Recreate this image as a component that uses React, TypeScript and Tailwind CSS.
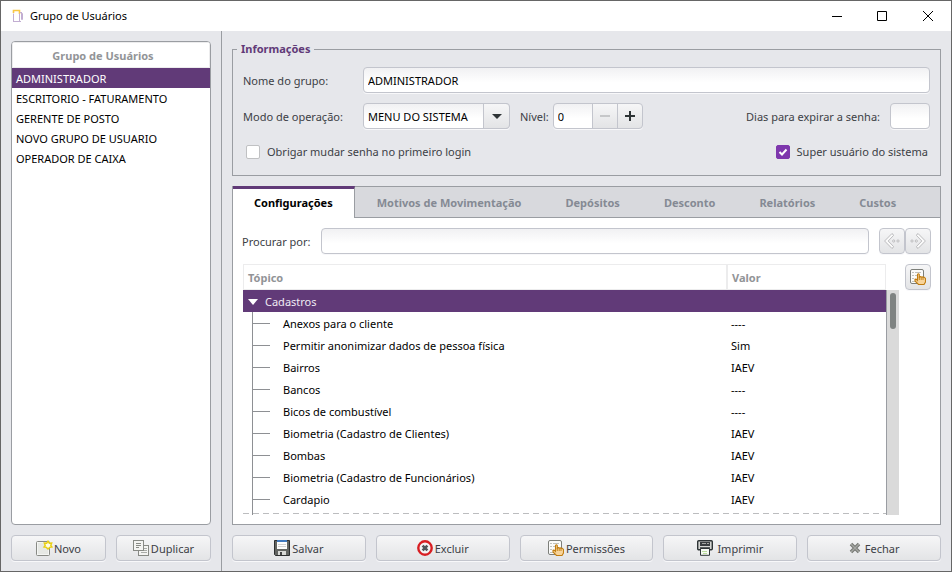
import { useState, type ReactNode } from 'react'

const groups = [
  'ADMINISTRADOR',
  'ESCRITORIO - FATURAMENTO',
  'GERENTE DE POSTO',
  'NOVO GRUPO DE USUARIO',
  'OPERADOR DE CAIXA',
]

const tabs = ['Configurações', 'Motivos de Movimentação', 'Depósitos', 'Desconto', 'Relatórios', 'Custos']

const topics = [
  { name: 'Anexos para o cliente', value: '----' },
  { name: 'Permitir anonimizar dados de pessoa física', value: 'Sim' },
  { name: 'Bairros', value: 'IAEV' },
  { name: 'Bancos', value: '----' },
  { name: 'Bicos de combustível', value: '----' },
  { name: 'Biometria (Cadastro de Clientes)', value: 'IAEV' },
  { name: 'Bombas', value: 'IAEV' },
  { name: 'Biometria (Cadastro de Funcionários)', value: 'IAEV' },
  { name: 'Cardapio', value: 'IAEV' },
]

const fieldClass =
  'h-[26px] min-w-0 rounded border border-[#c3c5cd] bg-linear-to-b from-[#f1f1f3] to-white to-60% px-1 text-black shadow-[0_1px_0_#f8f8fa] outline-none'
const buttonClass =
  'flex h-[26px] items-center justify-center border border-[#c3c5cd] bg-linear-to-b from-[#f6f6f7] to-[#e3e4e6] shadow-[0_1px_0_#f8f8fa]'

const AppIcon = () => (
  <svg width="12" height="14" viewBox="0 0 12 14" fill="none">
    <path d="M1.500 4V1.500h6V5" stroke="#f8c744" strokeWidth="1.600" />
    <path d="M1.500 4.500v8M1 12.500h8M7.500 4.500v8" stroke="#c2aed2" />
    <path d="M8 3.500h1.500v7h1v-6L9 3" stroke="#c2aed2" />
  </svg>
)

const NewIcon = () => (
  <svg width="17" height="16" viewBox="0 0 17 16">
    <rect x=".5" y="1.500" width="13" height="14" rx="1" fill="#f4f5f3" stroke="#888a85" />
    <path d="M2 3h10v11H2z" fill="#e6e8e4" />
    <path
      d="M12 1.200l1.300 2 2.400-.1-.9 2.200 1.200 1.700-2.300.4L12 9l-1.600-1.600L8 7l1.200-1.700-.9-2.200 2.400.1z"
      fill="#fffde5"
      stroke="#e9cf12"
      strokeWidth="1.400"
    />
  </svg>
)

const CopyIcon = () => (
  <svg width="16" height="16" viewBox="0 0 16 16" fill="#f4f4f2" stroke="#888a85">
    <rect x="5.500" y="5.500" width="10" height="10" />
    <path d="M11 8.500h3M11 10.500h3M8 12.500h6" stroke="#aaaca8" />
    <rect x=".5" y=".5" width="10" height="10" />
    <path d="M3 3.500h5M3 5.500h5M3 7.500h3" stroke="#888a85" />
  </svg>
)

const SaveIcon = () => (
  <svg width="16" height="16" viewBox="0 0 16 16">
    <path d="M.5.500h15v15h-14l-1-1z" fill="#636562" stroke="#2d2f30" />
    <path d="M3 1h10v8H3z" fill="#fdfdfd" />
    <path d="M3 0h10v2H3z" fill="#3f78bd" />
    <path d="M4 4.500h8M4 6.500h8" stroke="#d2d2d2" />
    <path d="M4 11h8v4H4z" fill="#d9dad7" />
    <path d="M6 12h2v3H6z" fill="#444" />
  </svg>
)

const DeleteIcon = () => (
  <svg width="16" height="16" viewBox="0 0 16 16">
    <circle cx="8" cy="8" r="6.700" fill="#f3f3f3" stroke="#d81e22" strokeWidth="2.400" />
    <path d="M5.600 5.600l4.800 4.800M10.400 5.600l-4.800 4.800" stroke="#50565a" strokeWidth="2.600" />
  </svg>
)

const PermissionIcon = () => (
  <svg width="16" height="16" viewBox="0 0 16 16">
    <rect x=".5" y=".5" width="13" height="14" rx="1.500" fill="#fbfbfa" stroke="#7d7f7a" />
    <path d="M2 3.500h2M5 3.500h6M2 6.500h2M5 6.500h2M2 9.500h2M2 12.500h3" stroke="#c0c2bd" />
    <path
      d="M7.500 11V5.500q.9-1.400 1.800 0V8q1.100-.9 1.800.2 1.100-.8 1.800.2 1.100-.6 1.800.4.800.2.800 1V13l-1.500 2.500H8.500L5 12V10.300q1-.5 2.500 1z"
      fill="#f8d49a"
      stroke="#c17d11"
      strokeWidth="1.100"
    />
    <path d="M9.300 8v3M11.200 8.500V11M13 8.800V11" stroke="#c17d11" strokeWidth=".9" />
  </svg>
)

const PrintIcon = () => (
  <svg width="16" height="16" viewBox="0 0 16 16">
    <rect x=".7" y=".7" width="14.600" height="9" rx="1" fill="#d6d7d4" stroke="#2e3436" strokeWidth="1.400" />
    <path d="M3 2h10v4H3z" fill="#3a3e40" />
    <path d="M5 3.500h4M10 3.500h2" stroke="#a5a7a4" />
    <path d="M3 8h10" stroke="#2e3436" strokeWidth="1.500" />
    <path d="M3.500 8.500h9v6.800h-9z" fill="#f7faf4" stroke="#2e3436" />
    <path d="M5 11.500h5M6 13.500h4" stroke="#b9dc9c" />
  </svg>
)

const CloseIcon = () => (
  <svg width="12" height="12" viewBox="0 0 12 12">
    <path d="M2 2l8 8M10 2l-8 8" stroke="#777974" strokeWidth="3.600" />
    <path d="M2 2l8 8M10 2l-8 8" stroke="#a5a7a3" strokeWidth="1.400" />
  </svg>
)

const ArrowIcon = ({ flip = false }: { flip?: boolean }) => (
  <svg
    width="16"
    height="16"
    viewBox="0 0 16 16"
    fill="#fafafa"
    stroke="#aeafb1"
    strokeWidth=".8"
    className={flip ? '-scale-x-100' : ''}
  >
    <path d="M7.800.7L.6 8l7.200 7.300q1.600-.1 1.700-1.800L4.200 8l5.300-5.500Q9.400.8 7.800.7z" strokeLinejoin="round" />
    <circle cx="9.700" cy="8" r="1.100" />
    <circle cx="14" cy="8" r="1.100" />
  </svg>
)

const ActionButton = ({ icon, label, gap = 'gap-0.5' }: { icon: ReactNode; label: string; gap?: string }) => (
  <button type="button" className={`${buttonClass} flex-1 rounded-sm ${gap}`}>
    {icon}
    <span className="pt-0.5">{label}</span>
  </button>
)

const TitleBar = () => (
  <header className="flex h-[30px] shrink-0 items-center bg-white pl-[11px] text-black">
    <AppIcon />
    <h1 className="ml-1.5 flex-1">Grupo de Usuários</h1>
    <button type="button" aria-label="Minimizar" className="flex h-full w-[45px] items-center justify-center">
      <svg width="10" height="10" viewBox="0 0 10 10" stroke="#000">
        <path d="M0 5.500h10" />
      </svg>
    </button>
    <button type="button" aria-label="Maximizar" className="flex h-full w-[45px] items-center justify-center">
      <svg width="10" height="10" viewBox="0 0 10 10" stroke="#000" fill="none">
        <path d="M.5.500h9v9h-9z" />
      </svg>
    </button>
    <button type="button" aria-label="Fechar janela" className="flex h-full w-[47px] items-center justify-center">
      <svg width="10" height="10" viewBox="0 0 10 10" stroke="#000">
        <path d="M0 0l10 10M10 0L0 10" />
      </svg>
    </button>
  </header>
)

const GroupList = () => {
  const [selected, setSelected] = useState(groups[0])

  return (
    <aside className="flex w-[221px] shrink-0 flex-col gap-2.5 border-r border-[#9a9da2] p-2.5">
      <section className="min-h-0 flex-1 overflow-hidden rounded-sm border border-[#9a9da2] bg-white">
        <h2 className="flex h-[26px] items-center justify-center border border-[#ececed] pt-0.5 pr-4 font-bold text-[#929497]">
          Grupo de Usuários
        </h2>
        <ul>
          {groups.map(group => (
            <li key={group}>
              <button
                type="button"
                onClick={() => setSelected(group)}
                className={`flex h-5 w-full items-center px-1 pt-0.5 ${
                  group === selected ? 'bg-[#613a78] text-white' : 'text-black'
                }`}
              >
                {group}
              </button>
            </li>
          ))}
        </ul>
      </section>
      <div className="flex gap-2.5">
        <ActionButton icon={<NewIcon />} label="Novo" gap="gap-px" />
        <ActionButton icon={<CopyIcon />} label="Duplicar" />
      </div>
    </aside>
  )
}

const GroupInfo = () => {
  const [level, setLevel] = useState(0)

  return (
    <fieldset className="border border-[#9a9da2] px-2.5 pb-[15px]">
      <legend className="-ml-1.5 px-1 text-[#613a78] leading-4 font-bold">Informações</legend>
      <div className="mt-2.5 flex items-center">
        <label htmlFor="name" className="w-[120px] pt-0.5">
          Nome do grupo:
        </label>
        <input id="name" defaultValue="ADMINISTRADOR" className={`${fieldClass} flex-1`} />
      </div>
      <div className="mt-2.5 flex items-center">
        <label htmlFor="mode" className="w-[120px] pt-0.5">
          Modo de operação:
        </label>
        <div className="relative flex">
          <select id="mode" className={`${fieldClass} w-[147px] appearance-none pt-0.5 pr-7`}>
            <option>MENU DO SISTEMA</option>
          </select>
          <span className={`${buttonClass} pointer-events-none absolute top-0 right-0 w-[27px] rounded-r`}>
            <svg width="10" height="5" viewBox="0 0 10 5" fill="#2e3436">
              <path d="M0 0h10L5 5z" />
            </svg>
          </span>
        </div>
        <label htmlFor="level" className="ml-2.5 pt-0.5">
          Nível:
        </label>
        <div className="ml-1 flex">
          <input
            id="level"
            value={level}
            onChange={e => setLevel(Number(e.target.value) || 0)}
            className={`${fieldClass} w-10 rounded-r-none`}
          />
          <button
            type="button"
            aria-label="Diminuir nível"
            disabled={level === 0}
            onClick={() => setLevel(level - 1)}
            className={`${buttonClass} -ml-px w-[26px] text-[#c6c7c9]`}
          >
            <svg width="10" height="10" viewBox="0 0 10 10" stroke="currentColor" strokeWidth="2">
              <path d="M0 5h10" />
            </svg>
          </button>
          <button
            type="button"
            aria-label="Aumentar nível"
            onClick={() => setLevel(level + 1)}
            className={`${buttonClass} -ml-px w-[26px] rounded-r text-[#2e3436]`}
          >
            <svg width="10" height="10" viewBox="0 0 10 10" stroke="currentColor" strokeWidth="2">
              <path d="M0 5h10M5 0v10" />
            </svg>
          </button>
        </div>
        <label htmlFor="days" className="mr-2.5 ml-auto pt-0.5">
          Dias para expirar a senha:
        </label>
        <input id="days" className={`${fieldClass} w-10`} />
      </div>
      <div className="mt-[15px] flex justify-between pl-[3px] leading-4">
        <label className="flex items-center gap-[7px]">
          <input type="checkbox" className="size-3.5 appearance-none rounded-xs border border-[#c0c1c3] bg-white" />
          Obrigar mudar senha no primeiro login
        </label>
        <label className="relative flex items-center gap-[7px] pr-0.5">
          <input
            type="checkbox"
            defaultChecked
            className="peer size-3.5 appearance-none rounded-xs border border-[#c0c1c3] bg-white checked:border-[#7e37ad] checked:bg-[#7e37ad]"
          />
          <svg
            width="14"
            height="14"
            viewBox="0 0 14 14"
            fill="none"
            className="pointer-events-none absolute left-0 hidden peer-checked:block"
          >
            <path d="M3.500 7l2.500 2.500 4.500-5" stroke="#fff" strokeWidth="2" />
          </svg>
          Super usuário do sistema
        </label>
      </div>
    </fieldset>
  )
}

const TopicTree = () => (
  <div className="relative flex min-h-0 min-w-0 flex-1 overflow-hidden">
    <div className="min-w-0 flex-1">
      <table className="w-full table-fixed border-separate border-spacing-0 text-left text-black">
        <thead>
          <tr className="h-[26px] text-[#929497]">
            <th className="border border-[#ececed] px-1 pt-0.5">Tópico</th>
            <th className="w-[159px] border border-[#ececed] px-1 pt-0.5">Valor</th>
          </tr>
        </thead>
        <tbody>
          <tr className="h-[22px] bg-[#613a78] text-[#f0eaf3]">
            <td colSpan={2} className="px-[5px] pt-0.5">
              <div className="flex items-center gap-[7px]">
                <svg width="10" height="6" viewBox="0 0 10 6" fill="#fff">
                  <path d="M0 0h10L5 6z" />
                </svg>
                Cadastros
              </div>
            </td>
          </tr>
          {topics.map(topic => (
            <tr key={topic.name} className="h-[22px]">
              <td className="pl-2">
                <div className="flex gap-3">
                  <svg width="20" height="22" viewBox="0 0 20 22" stroke="#8e9094">
                    <path d="M1.500 0v22M1.500 11.500H19" />
                  </svg>
                  <span className="pt-1">{topic.name}</span>
                </div>
              </td>
              <td className="pt-0.5 pl-1">{topic.value}</td>
            </tr>
          ))}
        </tbody>
      </table>
      <svg width="20" height="5" viewBox="0 0 20 5" stroke="#8e9094" className="ml-2">
        <path d="M1.500 0v5" />
      </svg>
    </div>
    <div className="mt-[26px] w-[13px] border-l border-[#9a9da2] bg-[#dadada] pt-[3px] pl-[3px]">
      <div className="h-9 w-1.5 rounded-full bg-[#7f8382]" />
    </div>
    <div className="absolute right-[13px] bottom-px left-0 h-px bg-[repeating-linear-gradient(90deg,#bcbdbf_0_6px,transparent_6px_10px)]" />
  </div>
)

const SettingsPanel = () => {
  const [active, setActive] = useState(tabs[0])

  return (
    <section className="flex min-h-0 flex-1 flex-col border border-t-0 border-[#9a9da2] bg-white">
      <div role="tablist" className="flex h-8 shrink-0 border-b border-[#9a9da2] bg-[#d8d9dd] font-bold">
        {tabs.map(tab => (
          <button
            key={tab}
            type="button"
            role="tab"
            aria-selected={tab === active}
            onClick={() => setActive(tab)}
            className={
              tab === active
                ? '-mb-px border-t-3 border-r border-t-[#613a78] border-r-[#9a9da2] bg-white px-[21px] pb-0.5 text-black'
                : 'border-t border-t-[#9a9da2] px-[22px] pt-0.5 text-[#858a94]'
            }
          >
            {tab}
          </button>
        ))}
        <div className="flex-1 border-t border-[#9a9da2]" />
      </div>
      <div className="flex min-h-0 flex-1 flex-col gap-2.5 p-[9px] pt-2.5">
        <div className="flex items-center">
          <label htmlFor="search" className="mr-2.5 pt-0.5">
            Procurar por:
          </label>
          <input id="search" className={`${fieldClass} flex-1`} />
          <button type="button" aria-label="Anterior" className={`${buttonClass} ml-2.5 w-[26px] rounded-sm`}>
            <ArrowIcon />
          </button>
          <button type="button" aria-label="Próximo" className={`${buttonClass} w-[26px] rounded-sm`}>
            <ArrowIcon flip />
          </button>
        </div>
        <div className="flex min-h-0 flex-1 gap-1.5 pl-px">
          <TopicTree />
          <button type="button" aria-label="Permissões do tópico" className={`${buttonClass} w-[26px] rounded-sm`}>
            <PermissionIcon />
          </button>
        </div>
      </div>
    </section>
  )
}

export default function App() {
  return (
    <div className="flex h-screen flex-col border border-[#666] bg-[#e6e7eb] font-['Noto_Sans',sans-serif] text-[11px] leading-4 whitespace-nowrap text-[#3c4045]">
      <TitleBar />
      <div className="flex min-h-0 flex-1">
        <GroupList />
        <main className="flex min-w-0 flex-1 flex-col gap-2.5 p-2.5">
          <GroupInfo />
          <SettingsPanel />
          <div className="grid grid-cols-5 gap-2.5">
            <ActionButton icon={<SaveIcon />} label="Salvar" />
            <ActionButton icon={<DeleteIcon />} label="Excluir" />
            <ActionButton icon={<PermissionIcon />} label="Permissões" />
            <ActionButton icon={<PrintIcon />} label="Imprimir" gap="gap-1" />
            <ActionButton icon={<CloseIcon />} label="Fechar" gap="gap-1" />
          </div>
        </main>
      </div>
    </div>
  )
}
